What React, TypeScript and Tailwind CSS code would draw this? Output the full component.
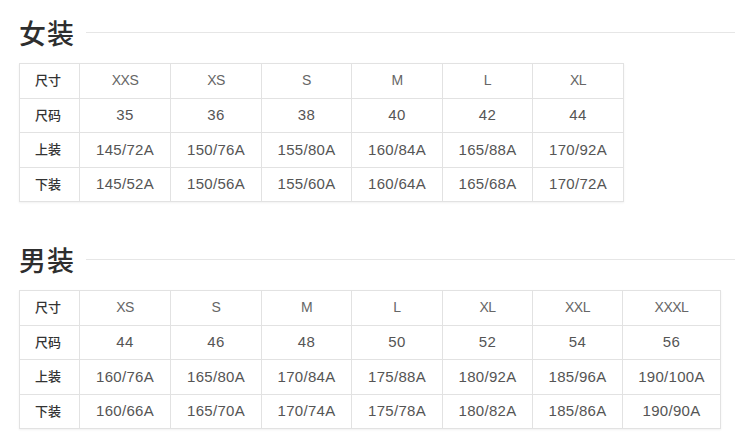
const font = { fontFamily: '"Liberation Sans", "Noto Sans CJK SC", sans-serif' };

type Table = {
  title: string;
  widths: number[];
  rows: { label: string; cells: string[] }[];
};

const women: Table = {
  title: "女装",
  widths: [60, 91, 91, 90, 91, 90, 91],
  rows: [
    { label: "尺寸", cells: ["XXS", "XS", "S", "M", "L", "XL"] },
    { label: "尺码", cells: ["35", "36", "38", "40", "42", "44"] },
    { label: "上装", cells: ["145/72A", "150/76A", "155/80A", "160/84A", "165/88A", "170/92A"] },
    { label: "下装", cells: ["145/52A", "150/56A", "155/60A", "160/64A", "165/68A", "170/72A"] },
  ],
};

const men: Table = {
  title: "男装",
  widths: [60, 91, 91, 90, 91, 90, 90, 98],
  rows: [
    { label: "尺寸", cells: ["XS", "S", "M", "L", "XL", "XXL", "XXXL"] },
    { label: "尺码", cells: ["44", "46", "48", "50", "52", "54", "56"] },
    { label: "上装", cells: ["160/76A", "165/80A", "170/84A", "175/88A", "180/92A", "185/96A", "190/100A"] },
    { label: "下装", cells: ["160/66A", "165/70A", "170/74A", "175/78A", "180/82A", "185/86A", "190/90A"] },
  ],
};

function SizeTable({ table }: { table: Table }) {
  const total = table.widths.reduce((a, b) => a + b, 0);
  return (
    <section>
      <div className="flex items-center h-[40px]">
        <h2
          className="text-[27px] leading-none font-medium text-[#2e2e2e] tracking-[1px]"
          style={{ fontFamily: '"Noto Sans CJK SC", sans-serif' }}
        >
          {table.title}
        </h2>
        <div className="ml-[11px] h-px flex-1 bg-[#e6e6e6] mr-[15px]" />
      </div>
      <table
        className="mt-[11px] table-fixed border-collapse border border-[#dcdcdc] shadow-[0_1px_2px_rgba(0,0,0,0.06)]"
        style={{ width: total }}
      >
        <colgroup>
          {table.widths.map((w, i) => (
            <col key={i} style={{ width: w }} />
          ))}
        </colgroup>
        <tbody>
          {table.rows.map((row, ri) => (
            <tr key={ri} className="h-[34.5px]">
              <td className="border border-[#e2e2e2] pl-[15px] text-[13px] font-medium text-[#333]">
                {row.label}
              </td>
              {row.cells.map((c, ci) => (
                <td
                  key={ci}
                  className={`border border-[#e2e2e2] text-center ${
                    ri === 0
                      ? "text-[14px] text-[#666] tracking-[-0.5px]"
                      : "text-[15px] text-[#555] tracking-[0.3px]"
                  }`}
                >
                  {c}
                </td>
              ))}
            </tr>
          ))}
        </tbody>
      </table>
    </section>
  );
}

export default function App() {
  return (
    <div className="w-[750px] h-[446px] bg-white pl-[19px] pt-[12px] overflow-hidden" style={font}>
      <SizeTable table={women} />
      <div className="h-[37px]" />
      <SizeTable table={men} />
    </div>
  );
}
